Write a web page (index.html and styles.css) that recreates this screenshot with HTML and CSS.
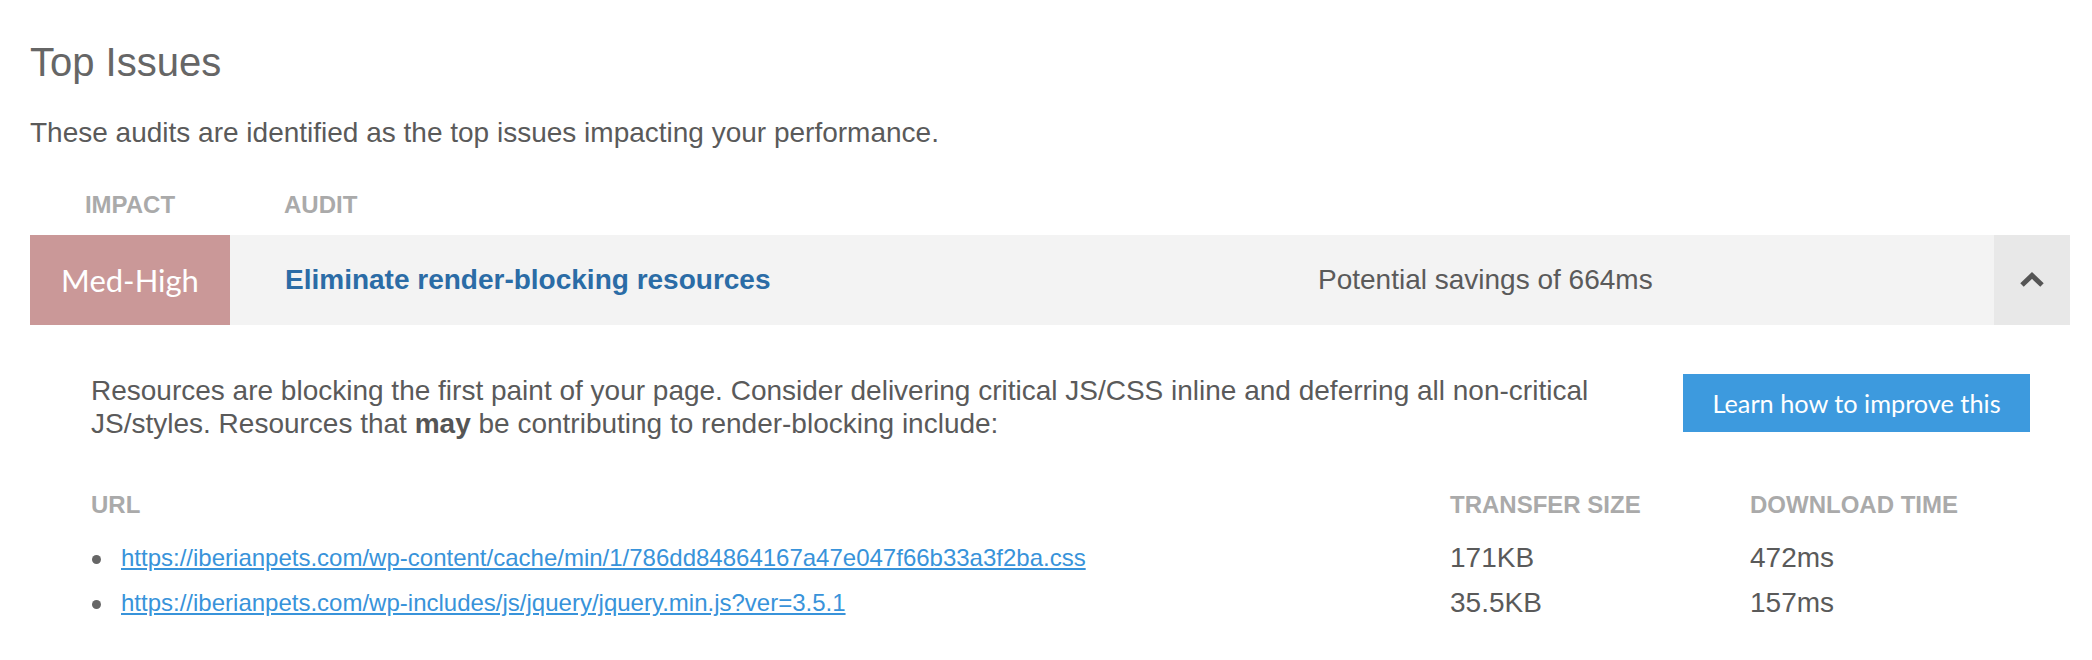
FILE: index.html
```html
<!DOCTYPE html>
<html lang="en">
<head>
    <meta charset="UTF-8">
    <meta name="viewport" content="width=device-width, initial-scale=1.0">
    <title>Top Issues</title>
    <link rel="stylesheet" href="styles.css">
</head>
<body>
    <div class="page">
        <h2 class="title">Top Issues</h2>
        <p class="lead">These audits are identified as the top issues impacting your performance.</p>

        <!-- 表头 -->
        <div class="audit-head">
            <div class="col-impact">IMPACT</div>
            <div class="col-audit">AUDIT</div>
        </div>

        <!-- 审计条目 -->
        <div class="audit-row">
            <div class="impact">Med-High</div>
            <div class="audit-name"><a href="#">Eliminate render-blocking resources</a></div>
            <div class="savings">Potential savings of 664ms</div>
            <div class="toggle">
                <svg width="28" height="18" viewBox="0 0 28 18">
                    <polyline points="4,14 14,4.5 24,14" fill="none" stroke="#555" stroke-width="5"/>
                </svg>
            </div>
        </div>

        <!-- 展开的详情 -->
        <div class="details">
            <div class="details-top">
                <p class="desc">Resources are blocking the first paint of your page. Consider delivering critical JS/CSS inline and deferring all non-critical JS/styles. Resources that <b>may</b> be contributing to render-blocking include:</p>
                <a class="learn-btn" href="#">Learn how to improve this</a>
            </div>

            <table class="resources">
                <thead>
                    <tr>
                        <th class="c-url">URL</th>
                        <th class="c-size">TRANSFER SIZE</th>
                        <th class="c-time">DOWNLOAD TIME</th>
                    </tr>
                </thead>
                <tbody>
                    <tr>
                        <td class="c-url"><span class="dot"></span><a href="#">https://iberianpets.com/wp-content/cache/min/1/786dd84864167a47e047f66b33a3f2ba.css</a></td>
                        <td class="c-size">171KB</td>
                        <td class="c-time">472ms</td>
                    </tr>
                    <tr>
                        <td class="c-url"><span class="dot"></span><a href="#">https://iberianpets.com/wp-includes/js/jquery/jquery.min.js?ver=3.5.1</a></td>
                        <td class="c-size">35.5KB</td>
                        <td class="c-time">157ms</td>
                    </tr>
                </tbody>
            </table>
        </div>
    </div>
</body>
</html>
```

FILE: styles.css
```css
/* 基本样式 */
body {
    margin: 0;
    padding: 0;
    background-color: #fff;
    font-family: "Liberation Sans", Arial, sans-serif;
    color: #5a5a5a;
}

.page {
    padding: 38px 22px 0 30px;
}

.title {
    margin: 0;
    font-size: 40px;
    line-height: 48px;
    font-weight: normal;
    color: #666;
}

.lead {
    margin: 31px 0 0 0;
    font-size: 28px;
    line-height: 32px;
}

/* 表头 */
.audit-head {
    display: grid;
    grid-template-columns: 200px 1fr;
    margin-top: 42px;
    font-size: 24px;
    line-height: 28px;
    font-weight: bold;
    color: #aaa;
}

.col-impact {
    text-align: center;
}

.col-audit {
    padding-left: 54px;
}

/* 审计条目 */
.audit-row {
    display: grid;
    grid-template-columns: 200px 1088px 1fr 76px;
    height: 90px;
    margin-top: 16px;
    background-color: #f3f3f3;
}

.audit-row > div {
    display: flex;
    align-items: center;
}

.impact {
    justify-content: center;
    background-color: #ca9898;
    color: #fff;
    font-family: Lato, "Open Sans", sans-serif;
    font-size: 31px;
}

.audit-name {
    padding-left: 55px;
    font-size: 28px;
    font-weight: bold;
}

.audit-name a {
    color: #2b6ca6;
    text-decoration: none;
}

.savings {
    font-size: 28px;
}

.toggle {
    justify-content: center;
    background-color: #e8e8e8;
}

/* 详情 */
.details {
    padding-left: 61px;
}

.details-top {
    display: flex;
    align-items: flex-start;
    gap: 60px;
    margin-top: 49px;
}

.desc {
    flex: 1;
    margin: 1px 0 0 0;
    font-size: 28px;
    line-height: 32.5px;
}

.desc b {
    color: #555;
}

.learn-btn {
    flex: none;
    width: 347px;
    height: 58px;
    margin-right: 40px;
    line-height: 58px;
    text-align: center;
    background-color: #3d9ade;
    color: #fff;
    font-family: Lato, "Open Sans", sans-serif;
    font-size: 25.3px;
    text-decoration: none;
    white-space: nowrap;
}

.resources {
    width: 100%;
    margin-top: 51px;
    border-collapse: collapse;
}

.resources th {
    padding: 0 0 16px 0;
    text-align: left;
    font-size: 24px;
    line-height: 28px;
    color: #aaa;
}

.resources td {
    padding: 0;
    height: 45px;
    font-size: 28px;
    line-height: 45px;
    vertical-align: middle;
}

.c-url {
    width: 1359px;
}

.c-size {
    width: 300px;
}

.resources td.c-url {
    font-size: 24px;
}

.resources td a {
    color: #3893da;
}

.dot {
    display: inline-block;
    width: 9px;
    height: 9px;
    margin: 0 20px 0 1px;
    border-radius: 50%;
    background-color: #666;
    vertical-align: middle;
}
```
